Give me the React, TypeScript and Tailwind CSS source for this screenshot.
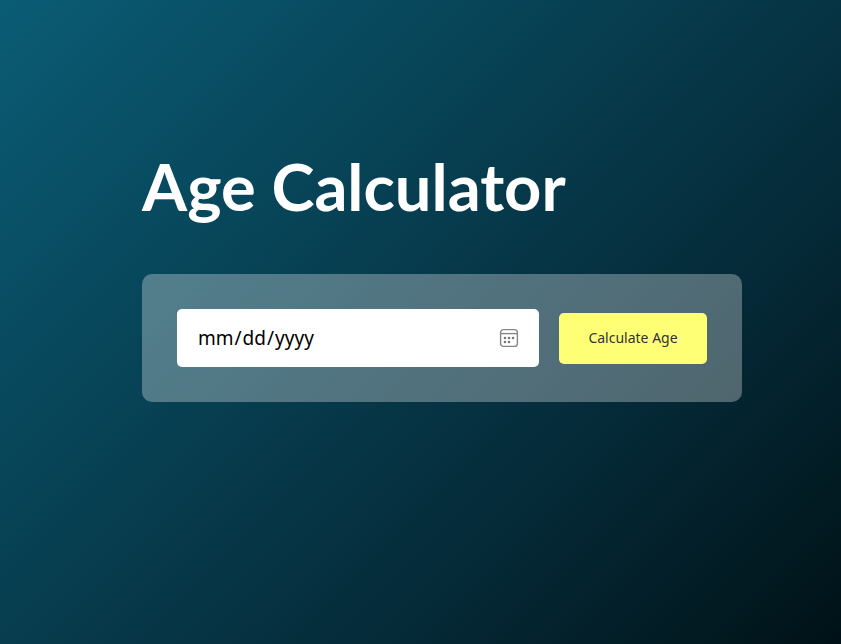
import React, { useRef, useState } from 'react';

export default function App() {
  const picker = useRef<HTMLInputElement>(null);
  const [date, setDate] = useState('');

  return (
    <main className="min-h-screen bg-linear-[135deg,#0a5c75,#052b39_68%,#001217] pt-[146px] pr-5 pl-[142px] font-['Noto_Sans',sans-serif]">
      <div className="w-full max-w-[600px]">
        <h1 className="font-['Lato',sans-serif] text-[65px] leading-[80px] font-bold text-white">Age Calculator</h1>
        <form
          className="mt-12 flex items-center gap-5 rounded-[10px] bg-white/30 p-[35px]"
          onSubmit={(e) => e.preventDefault()}
        >
          <div className="flex h-[58px] min-w-0 flex-1 items-center rounded-[5px] bg-white px-5">
            <input
              ref={picker}
              type="date"
              aria-label="Date of birth"
              value={date}
              onChange={(e) => setDate(e.target.value)}
              className="min-w-0 flex-1 text-[19px] text-black outline-none [&::-webkit-calendar-picker-indicator]:hidden"
            />
            <button type="button" aria-label="Open calendar" onClick={() => picker.current?.showPicker()}>
              <svg className="block" width="20" height="20" viewBox="0 0 20 20" fill="none" stroke="#858585" strokeWidth="1.4">
                <rect x="1.6" y="1.6" width="16.8" height="16.8" rx="3" />
                <path d="M1.6 5.6h16.8" />
                <g fill="#777" stroke="none">
                  <circle cx="6" cy="10" r="1.3" />
                  <circle cx="10" cy="10" r="1.3" />
                  <circle cx="14" cy="10" r="1.3" />
                  <circle cx="6" cy="14" r="1.3" />
                  <circle cx="10" cy="14" r="1.3" />
                </g>
              </svg>
            </button>
          </div>
          <button type="submit" className="h-[51px] w-[148px] rounded-[5px] bg-[#ffff76] text-sm text-[#333]">
            Calculate Age
          </button>
        </form>
      </div>
    </main>
  );
}
